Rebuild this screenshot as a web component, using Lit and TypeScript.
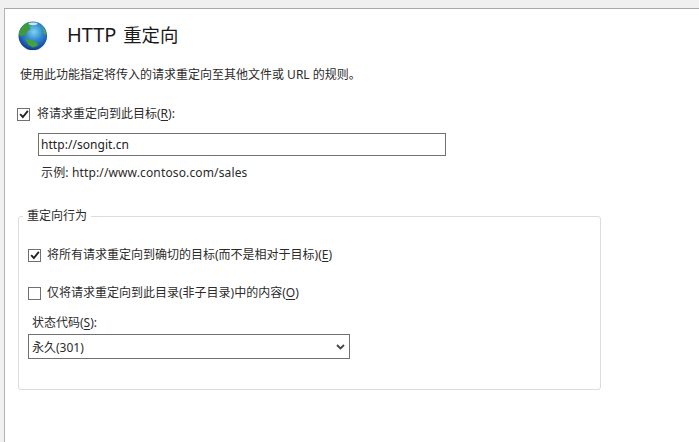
import { LitElement, html, css } from "lit";
import { customElement } from "lit/decorators.js";

const check = html`<svg viewBox="0 0 13 13" width="10" height="10"><path d="M1.5 6.8 L5 10.4 L11.5 2.4" fill="none" stroke="#222" stroke-width="2.4"/></svg>`;

@customElement("app-root")
export class AppRoot extends LitElement {
  static styles = css`
    :host { display: block; width: 699px; height: 442px; overflow: hidden; background: #f0f0f0; box-sizing: border-box; padding: 8px 0 0 4px;
      font-family: "Noto Sans", "Noto Sans CJK SC", sans-serif; font-size: 12px; color: #2b2b2b; }
    .panel { height: 434px; background: #fff; border-top: 1px solid #a8a8a8; border-left: 1px solid #b4b4b4; box-sizing: border-box; padding: 12px 0 0 13px; }
    .head { display: flex; align-items: center; height: 30px; gap: 19px; }
    .globe { width: 30px; height: 30px; flex: none; }
    h1 { margin: 0; font-size: 20px; font-weight: 400; color: #1a1a1a; line-height: 26px; position: relative; top: -1px; letter-spacing: -.1px; display: flex; align-items: baseline; gap: 7px; }
    h1 span { font-size: 18.4px; letter-spacing: 0; }
    .desc { margin: 15px 0 0 2px; line-height: 18px; }
    .row { display: flex; align-items: center; gap: 7px; line-height: 18px; }
    .top-check { margin-top: 21px; margin-left: -1px; }
    .box { width: 13px; height: 13px; box-sizing: border-box; border: 1px solid #707070; background: #fff; display: flex; align-items: center; justify-content: center; flex: none; }
    u { text-underline-offset: 2px; }
    .field { margin: 10px 0 0 20px; width: 408px; height: 23px; box-sizing: border-box; border: 1px solid #707070; padding: 0 2px; display: flex; align-items: center; color: #222; letter-spacing: .05px; }
    .hint { margin: 8px 0 0 23px; line-height: 18px; letter-spacing: .14px; }
    fieldset { margin: 25px 0 0 0; padding: 0 0 0 9px; width: 583px; height: 183px; box-sizing: border-box; border: 1px solid #dcdcdc; border-radius: 3px; min-width: 0; }
    legend { padding: 0 4px 0 4px; margin-left: -5px; line-height: 18px; }
    .r1 { margin-top: 21px; gap: 6px; }
    .r2 { margin-top: 20px; gap: 6px; }
    .lbl { margin: 12px 0 0 4px; line-height: 18px; }
    .sel { margin-top: 2px; width: 322px; height: 25px; box-sizing: border-box; border: 1px solid #707070; padding: 0 4px 0 3px; display: flex; align-items: center; justify-content: space-between; }
  `;

  render() {
    return html`<div class="panel">
      <div class="head">
        <svg class="globe" viewBox="0 0 30 30">
          <defs>
            <radialGradient id="sea" cx=".54" cy=".36" r=".68"><stop offset="0" stop-color="#7fd3ee"/><stop offset=".45" stop-color="#2f8ad2"/><stop offset=".8" stop-color="#1a55aa"/><stop offset="1" stop-color="#0c2a72"/></radialGradient>
            <radialGradient id="shade" cx=".5" cy=".5" r=".5"><stop offset="0" stop-color="#9a9a9a" stop-opacity=".5"/><stop offset="1" stop-color="#bbb" stop-opacity="0"/></radialGradient>
            <filter id="soft" x="-10%" y="-10%" width="120%" height="120%"><feGaussianBlur stdDeviation=".5"/></filter>
          </defs>
          <ellipse cx="15" cy="28" rx="11" ry="2" fill="url(#shade)"/>
          <circle cx="14.8" cy="14.8" r="14.3" fill="url(#sea)"/>
          <g filter="url(#soft)">
            <path d="M2.5 8 C5 3.5 9 1.2 13 1 L14 3 L11 5 L12.5 8 L8.5 11 L9 15 L6 13.5 L3.5 15.5 L1 14 C.8 12 1.4 10 2.5 8Z" fill="#3f9a3a"/>
            <path d="M7 18 L13 18.8 L19 21.5 L20 24.5 L15 26.5 L10.5 24 Z" fill="#45a03c"/>
            <path d="M23.5 5 L27 9 L28.8 14 L26 13 L25 9 Z" fill="#5aa544"/>
            <ellipse cx="15" cy="2.8" rx="4.5" ry="1.4" fill="#eef9fd" opacity=".8"/>
          </g>
        </svg>
        <h1>HTTP<span>重定向</span></h1>
      </div>
      <div class="desc">使用此功能指定将传入的请求重定向至其他文件或 URL 的规则。</div>
      <div class="row top-check"><span class="box">${check}</span><span>将请求重定向到此目标(<u>R</u>):</span></div>
      <div class="field">http://songit.cn</div>
      <div class="hint">示例: http://www.contoso.com/sales</div>
      <fieldset>
        <legend>重定向行为</legend>
        <div class="row r1"><span class="box">${check}</span><span>将所有请求重定向到确切的目标(而不是相对于目标)(<u>E</u>)</span></div>
        <div class="row r2"><span class="box"></span><span>仅将请求重定向到此目录(非子目录)中的内容(<u>O</u>)</span></div>
        <div class="lbl">状态代码(<u>S</u>):</div>
        <div class="sel"><span>永久(301)</span>
          <svg width="9" height="6" viewBox="0 0 9 6"><path d="M1 1 L4.5 4.5 L8 1" fill="none" stroke="#444" stroke-width="1.8"/></svg>
        </div>
      </fieldset>
    </div>`;
  }
}
